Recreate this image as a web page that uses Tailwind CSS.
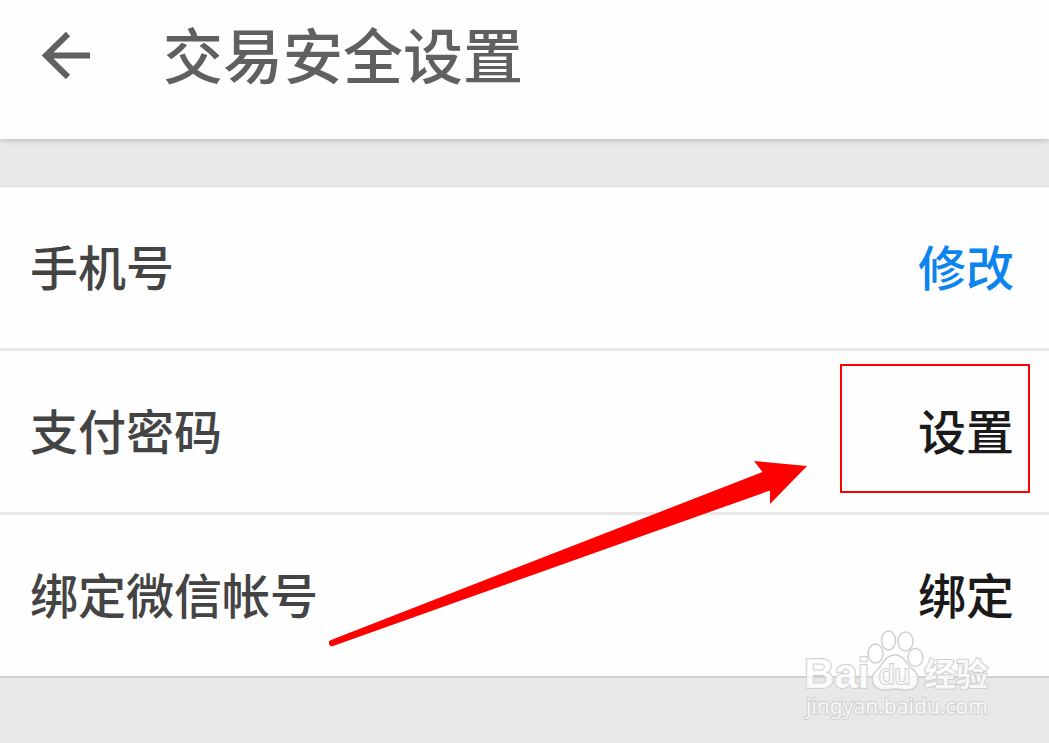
<!DOCTYPE html>
<html lang="zh-CN">
  <head>
    <meta charset="UTF-8" />
    <meta name="viewport" content="width=device-width, initial-scale=1.0" />
    <title>交易安全设置</title>
    <script src="https://cdn.jsdelivr.net/npm/@tailwindcss/browser@4"></script>
  </head>
  <body
    class="relative min-h-screen overflow-x-hidden bg-[#e8e8e8] font-['Noto_Sans_CJK_SC',sans-serif] text-[#444444]"
  >
    <!-- HEADER -->
    <header
      class="relative flex items-center gap-[72px] bg-[#fefefe] pt-[21px] pb-12 pl-10 text-[#606060] shadow-[0_1px_6px_rgba(0,0,0,0.22)]"
    >
      <button type="button" aria-label="返回" class="cursor-pointer">
        <svg
          class="size-[51px]"
          viewBox="0 0 51 51"
          fill="none"
          stroke="currentColor"
          stroke-width="6"
        >
          <path d="M28 3 6 24.500 28 46M6 24.500H50" />
        </svg>
      </button>
      <h1 class="pb-1.5 text-[60px] leading-[64px] font-medium">交易安全设置</h1>
    </header>

    <!-- SETTINGS LIST -->
    <main
      class="relative mt-[47px] border-t border-b-2 border-t-[#dddddd] border-b-[#d0d0d0] bg-[#fefefe] text-5xl leading-[56px] font-medium"
    >
      <ul class="divide-y-[3px] divide-[#e8e8e8]">
        <li class="flex items-center justify-between pt-[50px] pr-[35px] pb-[55px] pl-[30px]">
          <span>手机号</span>
          <button type="button" class="cursor-pointer text-[#0b84ee]">修改</button>
        </li>
        <li class="relative flex items-center justify-between pt-[50px] pr-[35px] pb-[55px] pl-[30px]">
          <span>支付密码</span>
          <button type="button" class="cursor-pointer text-[#1a1a1a]">设置</button>
          <div
            class="pointer-events-none absolute top-[13px] right-[19px] h-[129px] w-[190px] border-2 border-[#ff0000]"
          ></div>
        </li>
        <li class="flex items-center justify-between pt-[50px] pr-[35px] pb-[55px] pl-[30px]">
          <span>绑定微信帐号</span>
          <button type="button" class="cursor-pointer text-[#1a1a1a]">绑定</button>
        </li>
      </ul>

      <!-- Arrow to the password button -->
      <svg
        class="pointer-events-none absolute top-[274px] right-[242px] h-[186px] w-[478px] fill-[#ff0000]"
        viewBox="329 461 478 186"
        aria-hidden="true"
      >
        <path
          d="M807 466 754 461 762.500 472 331 640A3 3 0 0 0 333 646L770 490.500V504Z"
        />
      </svg>

      <!-- Watermark -->
      <svg
        class="pointer-events-none absolute top-[438px] right-[49px] h-[100px] w-[200px] fill-white/80 stroke-[#d0d0d0]"
        viewBox="800 625 200 100"
        aria-hidden="true"
      >
        <g stroke-width="1.500">
          <ellipse cx="875.500" cy="653.500" rx="7.500" ry="9.500" />
          <ellipse cx="888.500" cy="640.500" rx="7" ry="9.500" />
          <ellipse cx="905.500" cy="641.500" rx="7.500" ry="9.500" />
          <ellipse cx="915.500" cy="657.500" rx="7.500" ry="9" />
          <path
            d="M895 655C886 655 884 662 879 668C874 672 872 675 872 680C873 687 879 690 886 690L895 689L906 690C914 690 918 686 918 679C918 673 914 670 909 666C905 660 902 655 895 655Z"
          />
        </g>
        <g class="[paint-order:stroke]" stroke-width="2">
          <text
            x="804"
            y="688"
            class="font-['Liberation_Sans',sans-serif] text-[42px] font-bold"
          >
            Bai
          </text>
          <text
            x="879"
            y="684"
            class="font-['Liberation_Sans',sans-serif] text-[28px] font-normal"
          >
            du
          </text>
          <text x="924" y="686" class="text-[32px] font-bold">经验</text>
          <text
            x="806"
            y="714"
            class="font-['Noto_Sans',sans-serif] text-[21px] font-normal"
          >
            jingyan.baidu.com
          </text>
        </g>
      </svg>
    </main>
  </body>
</html>
